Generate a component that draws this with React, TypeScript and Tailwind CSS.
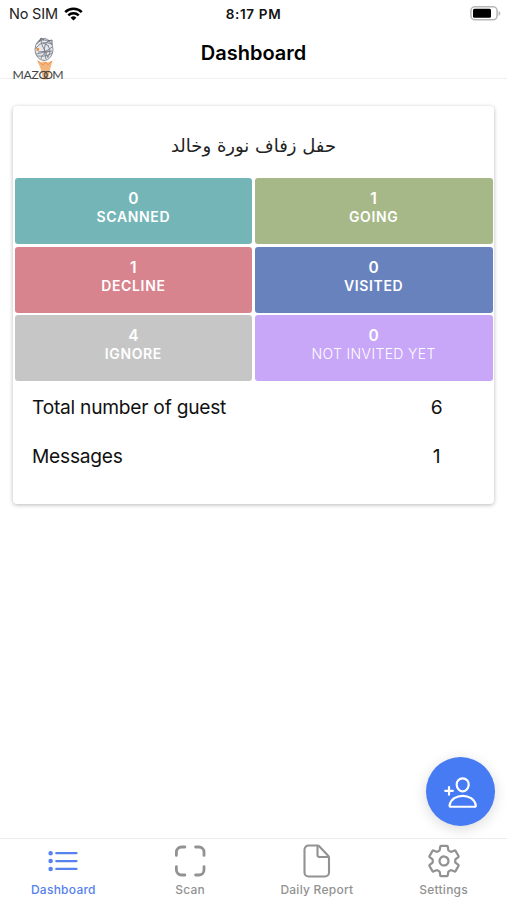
import type { ReactNode } from 'react';
import clsx from 'clsx';
import { IoListOutline, IoPersonAddOutline, IoSettingsOutline } from 'react-icons/io5';

interface Stat {
  value: number;
  label: string;
  color: string;
  light?: boolean;
}

const STATS: Stat[] = [
  { value: 0, label: 'SCANNED', color: 'bg-[#74b6b7]' },
  { value: 1, label: 'GOING', color: 'bg-[#a6b887]' },
  { value: 1, label: 'DECLINE', color: 'bg-[#d8848e]' },
  { value: 0, label: 'VISITED', color: 'bg-[#6882be]' },
  { value: 4, label: 'IGNORE', color: 'bg-[#c6c6c6]' },
  { value: 0, label: 'NOT INVITED YET', color: 'bg-[#c8a6f8]', light: true },
];

function StatusBar() {
  return (
    <div className="relative flex h-[27px] items-center justify-between pl-[9px] pr-[6px]">
      <div className="flex items-center gap-[6px]">
        <span className="text-[14.5px] tracking-[-0.2px] text-[#222]">No SIM</span>
        <svg width="19" height="14" viewBox="0 0 19 14" fill="none" stroke="#000" strokeWidth="2.5">
          <path d="M1.2 5.2a11.8 11.8 0 0 1 16.6 0" />
          <path d="M4.3 8.4a7.4 7.4 0 0 1 10.4 0" />
          <path d="M9.5 13.6 6.6 10.7a4.1 4.1 0 0 1 5.8 0Z" fill="#000" stroke="none" />
        </svg>
      </div>
      <span className="absolute inset-x-0 pt-px text-center text-[13.5px] font-semibold tracking-[0.65px] text-[#111]">
        8:17 PM
      </span>
      <svg width="31" height="15" viewBox="0 0 31 15">
        <rect x="0.9" y="0.8" width="26.2" height="13" rx="4" fill="#fff" stroke="#b8b8b8" strokeWidth="1.6" />
        <rect x="3" y="2.8" width="18" height="9" rx="1.5" fill="#000" />
        <path d="M28.6 5v4.8c1.1-.5 1.7-1.4 1.7-2.4S29.7 5.5 28.6 5Z" fill="#b4b4b4" />
      </svg>
    </div>
  );
}

function Logo() {
  return (
    <div className="absolute left-[12px] top-[36px] h-[46px] w-[52px]">
      <svg width="52" height="46" viewBox="0 0 52 46" fill="none">
        {/* cup */}
        <path d="m25 24 4 2.5 3-1 4 1 4.5-2-2.5 9-2 10h-5l-2-10Z" fill="#f3b67c" />
        <path d="m26 25 5 4 3-3 2 3 4-4" stroke="#ec9650" />
        {/* engraved ball */}
        <ellipse cx="32" cy="13.5" rx="9" ry="11" fill="#e6e8ec" stroke="#8b8f96" />
        <path
          d="M25 8c3-5 8-5 13-2M23.5 13c4-6 9-8 16-5M24 18c6-1 10-2 16-7M29 23c1-5 4-7 11-8M29 3c0 6 3 9 7 19M37 4c-6 5-5 11-3 19M25 20c5 0 9 1 15-3M31 7l6 3M36 10c2 3 3 6 0 11M26 16l12-1"
          stroke="#777c85"
          strokeWidth="0.9"
        />
        <path d="m27 6 2-4 3 2M36 5l4-1v5" stroke="#656b75" />
        <circle cx="25.8" cy="13.5" r="1.4" fill="#f28a36" />
      </svg>
      <p className="absolute left-[0.5px] top-[31.5px] whitespace-nowrap font-[Lato] text-[12.2px] leading-[13px] tracking-[-0.3px] text-[#444]">
        MAZ<span className="tracking-[-5px]">O</span>
        <span className="tracking-[-0.8px]">O</span>M
      </p>
    </div>
  );
}

function ScanIcon() {
  return (
    <svg width="32" height="32" viewBox="0 0 32 32" fill="none" stroke="currentColor" strokeWidth="2.8" strokeLinecap="round">
      <path d="M2.4 10.4V7a5 5 0 0 1 5-5h3.5M21.6 2H25a5 5 0 0 1 5 5v3.4M30 21.6V25a5 5 0 0 1-5 5h-3.4M10.9 30H7.4a5 5 0 0 1-5-5v-3.4" />
    </svg>
  );
}

function ReportIcon() {
  return (
    <svg width="28" height="34" viewBox="0 0 28 34" fill="none" stroke="currentColor" strokeWidth="2.1" strokeLinejoin="round">
      <path d="M5.5 1.5H14.5a2 2 0 0 1 1.5.6l9.4 9.8a2 2 0 0 1 .6 1.5V28.5a4 4 0 0 1-4 4H5.5a4 4 0 0 1-4-4v-23a4 4 0 0 1 4-4Z" />
      <path d="M14.5 2v9a2 2 0 0 0 2 2H26" />
    </svg>
  );
}

function StatTile({ value, label, color, light }: Stat) {
  return (
    <div className={clsx('flex h-[66px] flex-col items-center rounded-[3px] pt-[11px] text-white', color)}>
      <span className="text-[15.5px] font-semibold leading-[19px]">{value}</span>
      <span
        className={clsx(
          'text-[14px] leading-[18px]',
          light ? 'font-light tracking-[0.35px]' : 'font-semibold tracking-[0.65px]',
        )}
      >
        {label}
      </span>
    </div>
  );
}

function Row({ label, value }: { label: string; value: number }) {
  return (
    <div className="flex h-[49px] items-center justify-between pl-[17.5px] pr-[49.5px] text-[19.2px] tracking-[-0.25px] text-[#111]">
      <span>{label}</span>
      <span className="w-[13px] text-center">{value}</span>
    </div>
  );
}

function Tab({ icon, label, active }: { icon: ReactNode; label: string; active?: boolean }) {
  return (
    <div className={clsx('flex flex-1 flex-col items-center pt-[4px]', active ? 'text-[#5681ee]' : 'text-[#929292]')}>
      <div className="flex h-[36px] items-center">{icon}</div>
      <span className="pt-px text-[12px] font-medium leading-[20px] tracking-[0.25px]">{label}</span>
    </div>
  );
}

export default function App() {
  return (
    <div className="relative flex h-[900px] w-[507px] flex-col overflow-hidden bg-white font-[Inter,sans-serif]">
      <header className="relative h-[79px] border-b border-[#f0f0f0]">
        <StatusBar />
        <Logo />
        <h1 className="pt-px text-center text-[20px] font-semibold leading-[50px] text-black">Dashboard</h1>
      </header>

      <main className="flex-1 px-[13px] pt-[27px]">
        <section className="h-[398px] rounded-[4px] bg-white px-[1.5px] shadow-[0_1px_4px_rgba(0,0,0,0.28)]">
          <h2
            dir="rtl"
            className="h-[72px] pt-[26px] text-center font-['DejaVu_Sans',sans-serif] text-[18px] leading-[28px] text-[#222]"
          >
            حفل زفاف نورة وخالد
          </h2>
          <div className="grid grid-cols-2 gap-x-[2.5px] gap-y-[2.5px]">
            {STATS.map((s) => (
              <StatTile key={s.label} {...s} />
            ))}
          </div>
          <div className="pt-[2px]">
            <Row label="Total number of guest" value={6} />
            <Row label="Messages" value={1} />
          </div>
        </section>
      </main>

      <button
        aria-label="Add guest"
        className="absolute bottom-[74px] right-[12px] flex size-[69px] items-center justify-center rounded-full bg-[#467bf3] text-white shadow-[0_3px_14px_rgba(0,0,0,0.15)]"
      >
        <IoPersonAddOutline size={35} className="mt-px" />
      </button>

      <nav className="relative flex h-[62px] border-t border-[#ececec] bg-white">
        <Tab icon={<IoListOutline size={36} />} label="Dashboard" active />
        <Tab icon={<ScanIcon />} label="Scan" />
        <Tab icon={<ReportIcon />} label="Daily Report" />
        <Tab icon={<IoSettingsOutline size={36} />} label="Settings" />
      </nav>
    </div>
  );
}
